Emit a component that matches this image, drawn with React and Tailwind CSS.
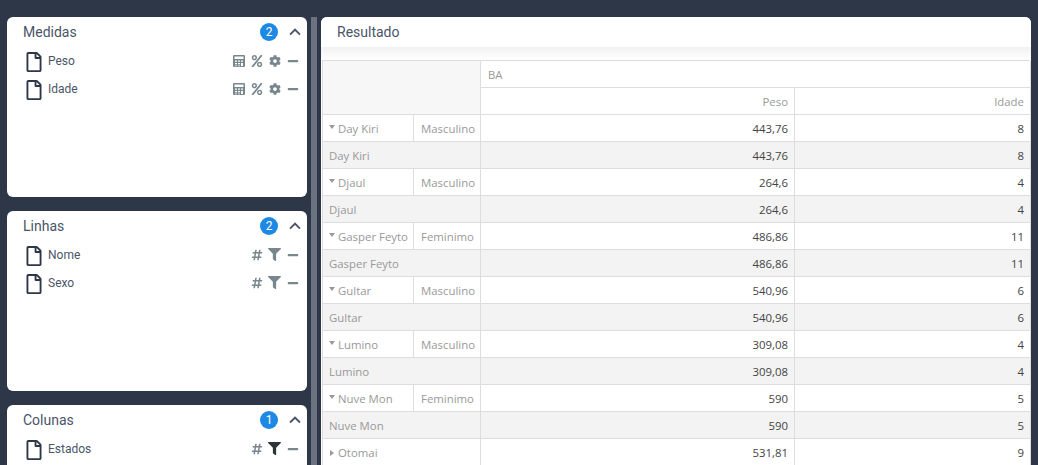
import React from 'react';
import { FaCog, FaFilter, FaHashtag, FaMinus, FaPercent, FaRegFile } from 'react-icons/fa';
import { MdKeyboardArrowUp } from 'react-icons/md';

const rows = [
  { name: 'Day Kiri', sex: 'Masculino', peso: '443,76', idade: '8' },
  { name: 'Djaul', sex: 'Masculino', peso: '264,6', idade: '4' },
  { name: 'Gasper Feyto', sex: 'Feminimo', peso: '486,86', idade: '11' },
  { name: 'Gultar', sex: 'Masculino', peso: '540,96', idade: '6' },
  { name: 'Lumino', sex: 'Masculino', peso: '309,08', idade: '4' },
  { name: 'Nuve Mon', sex: 'Feminimo', peso: '590', idade: '5' },
];

const Calculator = () => (
  <svg viewBox="0 0 12 12" className="w-3 h-3" fill="currentColor">
    <path d="M1 0h10a1 1 0 0 1 1 1v10a1 1 0 0 1-1 1H1a1 1 0 0 1-1-1V1a1 1 0 0 1 1-1zm.5 1.5v2.5h9V1.5zM2 5.5v1.3h2V5.5zm3 0v1.3h2V5.5zm3 0v1.3h2V5.5zM2 8v1.3h2V8zm3 0v1.3h2V8zm3 0v3h2V8zm-6 2.4v.9h2v-.9zm3 0v.9h2v-.9z" fillRule="evenodd" />
  </svg>
);

const MeasureActions = () => (
  <div className="flex items-center gap-[6px] text-[#78868e]">
    <Calculator />
    <FaPercent className="w-3 h-3" />
    <FaCog className="w-3 h-3" />
    <FaMinus className="w-3 h-3" />
  </div>
);

const FieldActions = ({ active }) => (
  <div className="flex items-center gap-[5px] text-[#78868e]">
    <FaHashtag className="w-3 h-3" />
    <FaFilter className={active ? 'w-[13px] h-[13px] text-[#2d3436]' : 'w-[13px] h-[13px]'} />
    <FaMinus className="w-3 h-3 ml-px" />
  </div>
);

const Panel = ({ title, count, fields, actions, className }) => (
  <section className={`bg-white rounded-md shrink-0 ${className}`}>
    <div className="h-[30px] pl-4 pr-[3px] flex items-center justify-between">
      <span className="text-sm text-[#4a5568]">{title}</span>
      <div className="flex items-center gap-[8px]">
        <span className="w-[18px] h-[18px] rounded-full bg-[#1e88e5] text-white text-xs flex items-center justify-center">
          {count}
        </span>
        <MdKeyboardArrowUp className="w-[18px] h-[18px] text-[#4a5568] scale-125" />
      </div>
    </div>
    <div className="pl-[17px] pr-2 pt-px">
      {fields.map((field) => (
        <div key={field} className="h-7 flex items-center">
          <FaRegFile className="w-5 h-5 text-[#2d3748] mr-[4px]" />
          <span className="flex-1 text-xs text-[#4a5568] -mt-[3px]">{field}</span>
          <div className="-mt-[3px]">{actions(field)}</div>
        </div>
      ))}
    </div>
  </section>
);

const Cell = ({ className, children }) => (
  <div className={`border-r border-b border-[#dddddd] pt-[2px] px-[6px] flex items-center min-w-0 whitespace-nowrap ${className || ''}`}>
    {children}
  </div>
);

const Value = ({ children, bg }) => (
  <Cell className={`justify-end text-[#444444] ${bg || ''}`}>{children}</Cell>
);

const Caret = ({ right }) => (
  <span
    className={
      right
        ? 'w-0 h-0 mr-[4px] border-y-[3px] border-y-transparent border-l-[4px] border-l-[#999999]'
        : 'w-0 h-0 mr-[3px] -mt-[4px] border-x-[3.5px] border-x-transparent border-t-[4px] border-t-[#999999]'
    }
  />
);

export default function App() {
  return (
    <div className="w-[1038px] h-[465px] overflow-hidden bg-[#2d3748] flex pt-[17px] pl-[7px] font-['Roboto',sans-serif]">
      {/* Left column */}
      <div className="w-[300px] shrink-0 flex flex-col gap-[14px]">
        <Panel title="Medidas" count={2} fields={['Peso', 'Idade']} actions={() => <MeasureActions />} className="h-[180px]" />
        <Panel title="Linhas" count={2} fields={['Nome', 'Sexo']} actions={() => <FieldActions />} className="h-[180px]" />
        <Panel title="Colunas" count={1} fields={['Estados']} actions={() => <FieldActions active />} className="h-[180px]" />
      </div>

      {/* Splitter */}
      <div className="w-[6px] ml-[4px] mr-[4px] shrink-0 bg-[#6b7280]" />

      {/* Result */}
      <div className="w-[710px] shrink-0 bg-white rounded-t-md overflow-hidden">
        <div className="h-[30px] pl-4 flex items-center text-sm text-[#4a5568] bg-white">Resultado</div>
        <div className="h-[13px] bg-gradient-to-b from-[#f1f1f1] to-white" />
        <div className="ml-px w-[708px] border-t border-l border-[#dddddd] grid grid-cols-[91px_67px_314px_236px] auto-rows-[27px] text-[11.4px] font-['Open_Sans',sans-serif] text-[#999999]">
          <Cell className="col-span-2 row-span-2 bg-[#f7f7f7]" />
          <Cell className="col-span-2 px-[7px]">BA</Cell>
          <Cell className="justify-end">Peso</Cell>
          <Cell className="justify-end">Idade</Cell>
          {rows.map((row) => (
            <React.Fragment key={row.name}>
              <Cell className="px-[5px]"><Caret />{row.name}</Cell>
              <Cell className="px-[7px]">{row.sex}</Cell>
              <Value>{row.peso}</Value>
              <Value>{row.idade}</Value>
              <Cell className="col-span-2 bg-[#f3f3f3]">{row.name}</Cell>
              <Value bg="bg-[#f3f3f3]">{row.peso}</Value>
              <Value bg="bg-[#f3f3f3]">{row.idade}</Value>
            </React.Fragment>
          ))}
          <Cell className="col-span-2 px-[7px]"><Caret right />Otomai</Cell>
          <Value>531,81</Value>
          <Value>9</Value>
        </div>
      </div>
    </div>
  );
}
